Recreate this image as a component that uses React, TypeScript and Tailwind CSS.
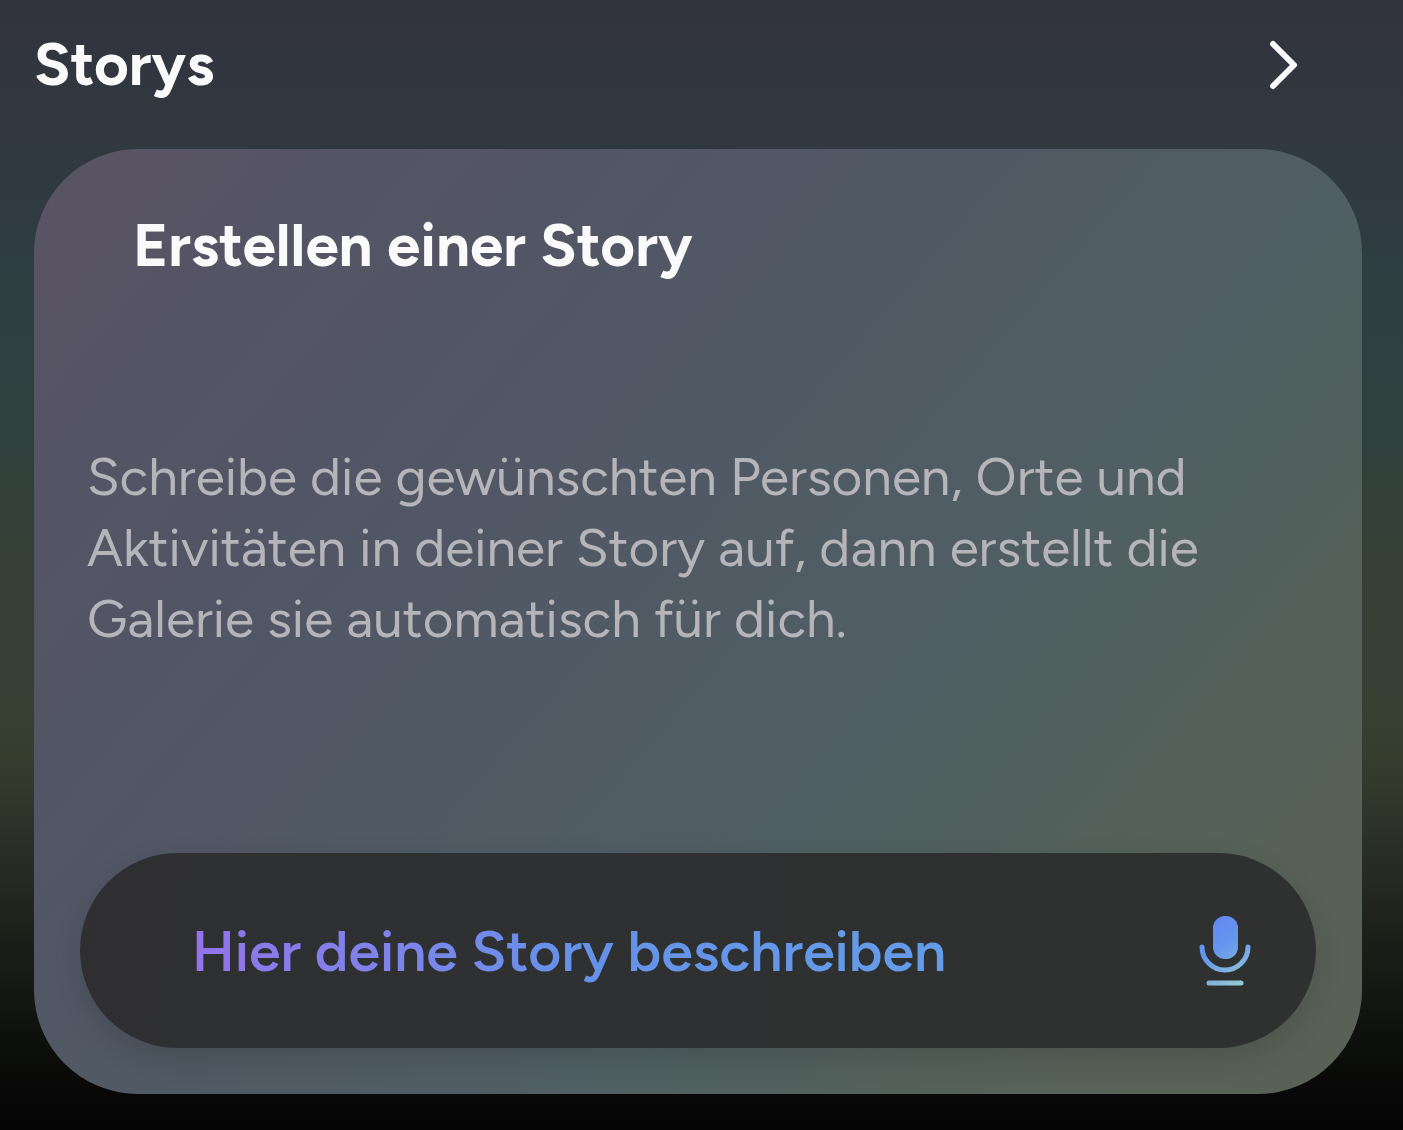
const mic = 'url(#mic)';

export default function App() {
  return (
    <main className="flex min-h-screen flex-col bg-[linear-gradient(180deg,#32323f_0%,#31373f_8%,#303a42_18%,#2e3f42_25%,#2f403e_36%,#364036_50%,#384034_62%,#363d2d_67%,#2a2f26_75%,#171a15_86%,#080908_96%,#040404_100%)] px-[34px] pb-9 font-['Figtree','Inter',sans-serif] text-[#fafafa]">
      <header className="flex h-[149px] items-start justify-between pt-7 pr-[71px]">
        <h1 className="text-[60px] leading-[72px] font-bold">Storys</h1>
        <button type="button" aria-label="Storys öffnen" className="mt-3 flex">
          <svg width="32" height="52" viewBox="0 0 32 52" fill="none" stroke="#fafafa" strokeWidth="6" strokeLinecap="round" strokeLinejoin="round">
            <path d="M7 4 28 25 7 46" />
          </svg>
        </button>
      </header>
      <section className="mr-[7px] flex flex-1 flex-col rounded-[104px] bg-[linear-gradient(131deg,#5a5464_0%,#565464_12%,#525565_26%,#505964_42%,#505f64_63%,#50605e_68%,#566159_84%,#5a6156_100%)] px-[46px] pt-[60px] pb-[46px]">
        <h2 className="pl-[53px] text-[60px] leading-[72px] font-bold">Erstellen einer Story</h2>
        <p className="mt-40 pl-[7px] text-[53px] leading-[71px] text-[#b5b4b8]">
          Schreibe die gewünschten Personen, Orte und<br />Aktivitäten in deiner Story auf, dann erstellt die<br />Galerie sie automatisch für dich.
        </p>
        <button type="button" className="mt-auto flex h-[195px] items-center justify-between rounded-full bg-[linear-gradient(100deg,#2f2f32_0%,#2e3031_40%,#2e312f_100%)] pr-[65px] pl-[112px] shadow-[0_10px_28px_rgba(0,0,0,0.14)]">
          <span className="bg-linear-to-r from-[#9273ea] via-[#6591e9] to-[#649ce8] bg-clip-text text-[57px] leading-[72px] font-semibold text-transparent">Hier deine Story beschreiben</span>
          <svg width="52" height="72" viewBox="0 0 52 72" fill="none">
            <defs>
              <linearGradient id="mic" x1="6" y1="8" x2="44" y2="70" gradientUnits="userSpaceOnUse">
                <stop stopColor="#6288f2" />
                <stop offset="0.4" stopColor="#6596ee" />
                <stop offset="1" stopColor="#96cbd2" />
              </linearGradient>
            </defs>
            <rect x="14" y="1" width="25" height="43" rx="12" fill={mic} />
            <path d="M3 32a23 23 0 0 0 46 0M10 68h32" stroke={mic} strokeWidth="5" strokeLinecap="round" />
          </svg>
        </button>
      </section>
    </main>
  );
}
